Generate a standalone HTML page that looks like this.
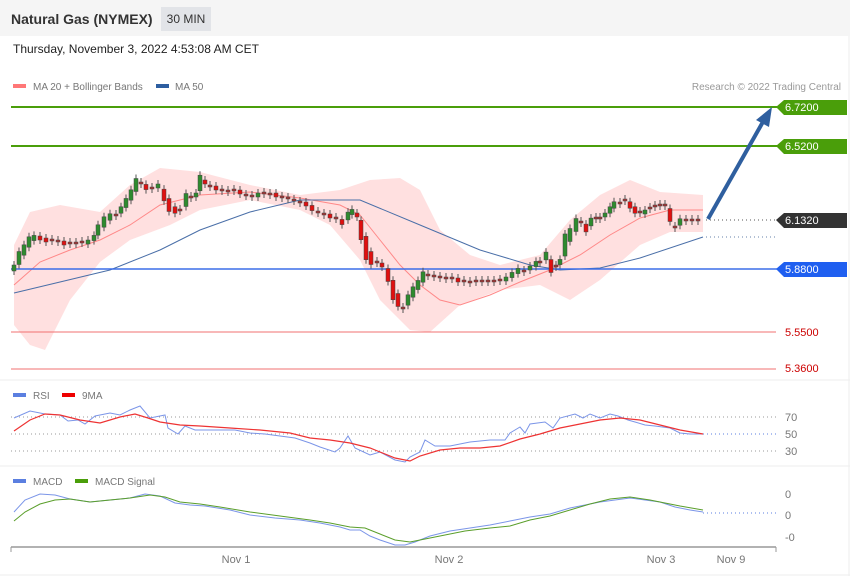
<!DOCTYPE html>
<html><head><meta charset="utf-8"><style>
body{margin:0;width:850px;height:576px;background:#fff;font-family:"Liberation Sans",sans-serif;overflow:hidden;position:relative}
.hdr{position:absolute;left:0;top:0;width:850px;height:36px;background:#f5f5f5}
.t{position:absolute;left:11px;top:11px;font-size:14px;font-weight:bold;color:#333}
.tf{position:absolute;left:161px;top:7px;width:50px;height:24px;background:#e2e4e8;font-size:12px;color:#333;line-height:24px;text-align:center}
.dt{position:absolute;left:13px;top:42px;font-size:12px;color:#222}
</style></head><body>
<div class="hdr"><div class="t">Natural Gas (NYMEX)</div><div class="tf">30 MIN</div></div>
<div class="dt">Thursday, November 3, 2022 4:53:08 AM CET</div>
<svg width="850" height="576" style="position:absolute;left:0;top:0" font-family="Liberation Sans, sans-serif">
<line x1="0" y1="380" x2="850" y2="380" stroke="#eee"/>
<line x1="0" y1="466" x2="850" y2="466" stroke="#eee"/>
<line x1="849" y1="36" x2="849" y2="576" stroke="#eee"/>
<line x1="0" y1="575" x2="850" y2="575" stroke="#eee"/>
<rect x="13" y="84" width="13" height="4" fill="#f77"/>
<text x="33" y="90" font-size="10" fill="#777">MA 20 + Bollinger Bands</text>
<rect x="156" y="84" width="13" height="4" fill="#2d5ea0"/>
<text x="175" y="90" font-size="10" fill="#777">MA 50</text>
<text x="841" y="90" font-size="10" fill="#999" text-anchor="end">Research © 2022 Trading Central</text>
<polygon fill="#ffe0e0" points="14,245 30,212 60,205 100,212 130,185 160,168 200,172 250,185 300,195 340,190 370,180 400,178 420,190 440,230 470,255 500,265 540,255 570,220 600,195 630,180 660,192 703,195 703,232 670,232 640,245 600,280 570,300 540,285 500,290 460,305 430,332 410,330 380,300 360,260 330,225 300,210 250,200 200,210 170,225 130,240 100,262 70,300 45,350 30,345 14,325"/>
<polyline fill="none" stroke="#f88" stroke-width="1" points="14,285 40,262 70,250 100,240 130,225 160,205 200,195 250,192 300,198 340,205 360,215 380,240 400,265 420,285 440,300 460,305 490,295 520,282 550,270 580,255 610,235 640,218 670,210 703,210"/>
<polyline fill="none" stroke="#4a6fa8" stroke-width="1" points="14,293 60,282 110,270 160,250 200,230 250,212 300,200 360,200 420,225 480,250 530,265 560,270 600,268 640,258 703,237"/>
<line x1="11" y1="107" x2="778" y2="107" stroke="#4a9e0a" stroke-width="2"/>
<line x1="11" y1="146" x2="778" y2="146" stroke="#4a9e0a" stroke-width="2"/>
<line x1="11" y1="269" x2="778" y2="269" stroke="#3b6ee8" stroke-width="1.5"/>
<line x1="11" y1="332" x2="776" y2="332" stroke="#f07070" stroke-width="1"/>
<line x1="11" y1="369" x2="776" y2="369" stroke="#f07070" stroke-width="1"/>
<line x1="706" y1="220" x2="776" y2="220" stroke="#555" stroke-dasharray="1,3"/>
<line x1="706" y1="237" x2="776" y2="237" stroke="#6680aa" stroke-dasharray="1,3"/>
<g id="c"></g>
<line x1="708" y1="219" x2="764" y2="120" stroke="#2f5f9f" stroke-width="4"/>
<polygon points="772,107 756,120 769,127" fill="#2f5f9f"/>
<polygon points="776,107 784,100 847,100 847,115 784,115" fill="#4a9e0a"/>
<text x="785" y="111" font-size="11" fill="#fff">6.7200</text>
<polygon points="776,146 784,139 847,139 847,154 784,154" fill="#4a9e0a"/>
<text x="785" y="150" font-size="11" fill="#fff">6.5200</text>
<polygon points="776,220 784,213 847,213 847,228 784,228" fill="#333"/>
<text x="785" y="224" font-size="11" fill="#fff">6.1320</text>
<polygon points="776,269 784,262 847,262 847,277 784,277" fill="#1f5ff0"/>
<text x="785" y="273" font-size="11" fill="#fff">5.8800</text>
<text x="785" y="336" font-size="11" fill="#c00">5.5500</text>
<text x="785" y="372" font-size="11" fill="#c00">5.3600</text>
<!-- RSI -->
<rect x="13" y="393" width="13" height="4" fill="#5b7fe0"/><text x="33" y="399" font-size="10" fill="#777">RSI</text>
<rect x="62" y="393" width="13" height="4" fill="#e00"/><text x="82" y="399" font-size="10" fill="#777">9MA</text>
<g stroke="#999" stroke-dasharray="1,3"><line x1="11" y1="417" x2="776" y2="417"/><line x1="11" y1="434" x2="776" y2="434"/><line x1="11" y1="451" x2="776" y2="451"/></g>
<line x1="703" y1="434" x2="776" y2="434" stroke="#5b7fe0" stroke-dasharray="1,3"/>
<text x="785" y="421" font-size="11" fill="#777">70</text><text x="785" y="438" font-size="11" fill="#777">50</text><text x="785" y="455" font-size="11" fill="#777">30</text>
<polyline fill="none" stroke="#7b95e8" stroke-width="1" points="14,418 30,411 45,414 60,415 68,421 78,420 85,424 95,416 110,413 120,415 130,410 140,406 150,418 165,415 168,428 178,434 185,426 195,430 215,430 235,430 250,433 265,434 280,436 295,438 310,443 320,447 335,452 340,448 348,436 355,448 370,455 380,452 395,460 405,462 410,457 420,452 425,440 435,446 450,446 470,442 490,440 505,440 510,433 520,427 525,433 530,424 545,422 553,428 560,418 575,414 583,418 590,414 600,418 610,414 618,416 628,420 635,422 645,425 655,426 670,428 680,433 690,434 703,434"/>
<polyline fill="none" stroke="#e33" stroke-width="1.2" points="14,431 30,420 45,414 60,415 80,420 100,423 120,417 135,414 148,418 160,422 180,425 200,426 230,428 260,430 290,433 310,438 330,440 350,443 370,448 380,452 395,458 410,461 420,456 440,450 460,448 480,448 500,446 520,439 540,434 560,428 580,424 600,420 620,418 640,420 660,425 680,430 703,434"/>
<!-- MACD -->
<rect x="13" y="479" width="13" height="4" fill="#5b7fe0"/><text x="33" y="485" font-size="10" fill="#777">MACD</text>
<rect x="75" y="479" width="13" height="4" fill="#4a9e0a"/><text x="95" y="485" font-size="10" fill="#777">MACD Signal</text>
<line x1="703" y1="513" x2="776" y2="513" stroke="#5b7fe0" stroke-dasharray="1,3"/>
<text x="785" y="498" font-size="11" fill="#777">0</text><text x="785" y="519" font-size="11" fill="#777">0</text><text x="785" y="541" font-size="11" fill="#777">-0</text>
<polyline fill="none" stroke="#7b95e8" stroke-width="1" points="14,512 25,500 40,494 55,495 70,499 90,502 110,500 130,498 145,494 160,496 175,503 190,505 205,506 230,510 250,515 275,518 300,520 320,523 340,527 350,530 360,530 370,536 380,540 395,545 405,545 415,542 430,536 450,531 470,528 490,525 510,521 530,517 550,514 570,508 585,505 600,502 615,500 630,498 645,500 660,502 675,507 690,510 703,512"/>
<polyline fill="none" stroke="#5a9e2a" stroke-width="1" points="14,521 25,512 40,504 55,500 70,499 90,502 110,500 130,498 150,495 165,497 180,502 200,504 220,507 250,512 280,516 310,520 330,523 350,527 365,528 380,534 395,540 410,542 425,539 445,535 465,531 490,528 510,526 530,520 550,516 570,510 590,504 610,499 630,497 650,500 665,503 680,506 703,510"/>
<line x1="11" y1="547" x2="776" y2="547" stroke="#999" stroke-width="1.5"/>
<line x1="11" y1="547" x2="11" y2="552" stroke="#999"/><line x1="776" y1="547" x2="776" y2="552" stroke="#999"/>
<g font-size="11" fill="#777" text-anchor="middle"><text x="236" y="563">Nov 1</text><text x="449" y="563">Nov 2</text><text x="661" y="563">Nov 3</text><text x="731" y="563">Nov 9</text></g>
</svg>
<script>
var d=[[14,268,'g'],[19,258,'g'],[24,250,'g'],[29,242,'g'],[34,238,'g'],[40,238,'r'],[46,240,'r'],[52,240,'n'],[58,241,'n'],[64,243,'r'],[70,243,'n'],[76,243,'n'],[82,242,'n'],[88,242,'g'],[94,238,'g'],[98,230,'g'],[104,222,'g'],[110,217,'g'],[116,215,'n'],[121,210,'g'],[126,203,'g'],[131,195,'g'],[136,185,'g'],[141,183,'n'],[146,187,'r'],[152,188,'n'],[158,186,'g'],[164,195,'r'],[169,205,'r'],[175,210,'r'],[180,210,'n'],[186,200,'g'],[191,197,'n'],[196,195,'g'],[200,183,'g'],[205,182,'r'],[210,186,'n'],[216,188,'r'],[222,190,'n'],[228,191,'n'],[234,190,'n'],[240,192,'r'],[246,195,'n'],[252,196,'n'],[258,195,'g'],[264,193,'n'],[270,194,'n'],[276,195,'r'],[282,197,'n'],[288,198,'n'],[294,200,'n'],[300,202,'n'],[306,204,'r'],[312,208,'r'],[318,212,'n'],[324,214,'n'],[330,216,'r'],[336,218,'n'],[342,222,'r'],[348,216,'g'],[352,212,'g'],[357,215,'r'],[361,230,'r'],[366,248,'r'],[371,258,'r'],[377,262,'n'],[382,265,'r'],[388,275,'r'],[393,290,'r'],[398,300,'r'],[403,308,'n'],[408,300,'g'],[413,292,'g'],[418,285,'g'],[423,277,'g'],[428,275,'n'],[434,276,'n'],[440,277,'n'],[446,278,'n'],[452,278,'n'],[458,280,'r'],[464,281,'n'],[470,282,'n'],[476,281,'n'],[482,281,'n'],[488,281,'n'],[494,281,'n'],[500,280,'n'],[506,279,'g'],[512,275,'g'],[518,271,'g'],[524,271,'n'],[530,268,'g'],[536,264,'g'],[540,262,'n'],[546,256,'g'],[551,266,'r'],[556,266,'n'],[560,262,'g'],[565,245,'g'],[570,235,'g'],[576,225,'g'],[581,222,'n'],[586,228,'r'],[591,222,'g'],[596,218,'n'],[600,218,'n'],[605,215,'g'],[610,210,'g'],[614,205,'g'],[620,203,'n'],[625,200,'n'],[630,205,'r'],[635,210,'r'],[640,212,'n'],[645,212,'g'],[650,208,'n'],[655,206,'n'],[660,205,'n'],[665,205,'n'],[670,215,'r'],[675,227,'n'],[680,222,'g'],[686,220,'n'],[692,220,'n'],[698,220,'n']];
var s='';for(var i=0;i<d.length;i++){var x=d[i][0],y=d[i][1],c=d[i][2];var h=c=='n'?2:(i>0?Math.max(4,Math.abs(y-d[i-1][1])*1.3):6);var f=c=='g'?'#2e8b2e':(c=='r'?'#e01010':'#a33');
s+='<line x1="'+x+'" y1="'+(y-h/2-4)+'" x2="'+x+'" y2="'+(y+h/2+4)+'" stroke="#555" stroke-width="1"/><rect x="'+(x-2)+'" y="'+(y-h/2)+'" width="4" height="'+h+'" fill="'+f+'" stroke="#444" stroke-width="0.5"/>';}
document.getElementById('c').innerHTML=s;
</script>
</body></html>
